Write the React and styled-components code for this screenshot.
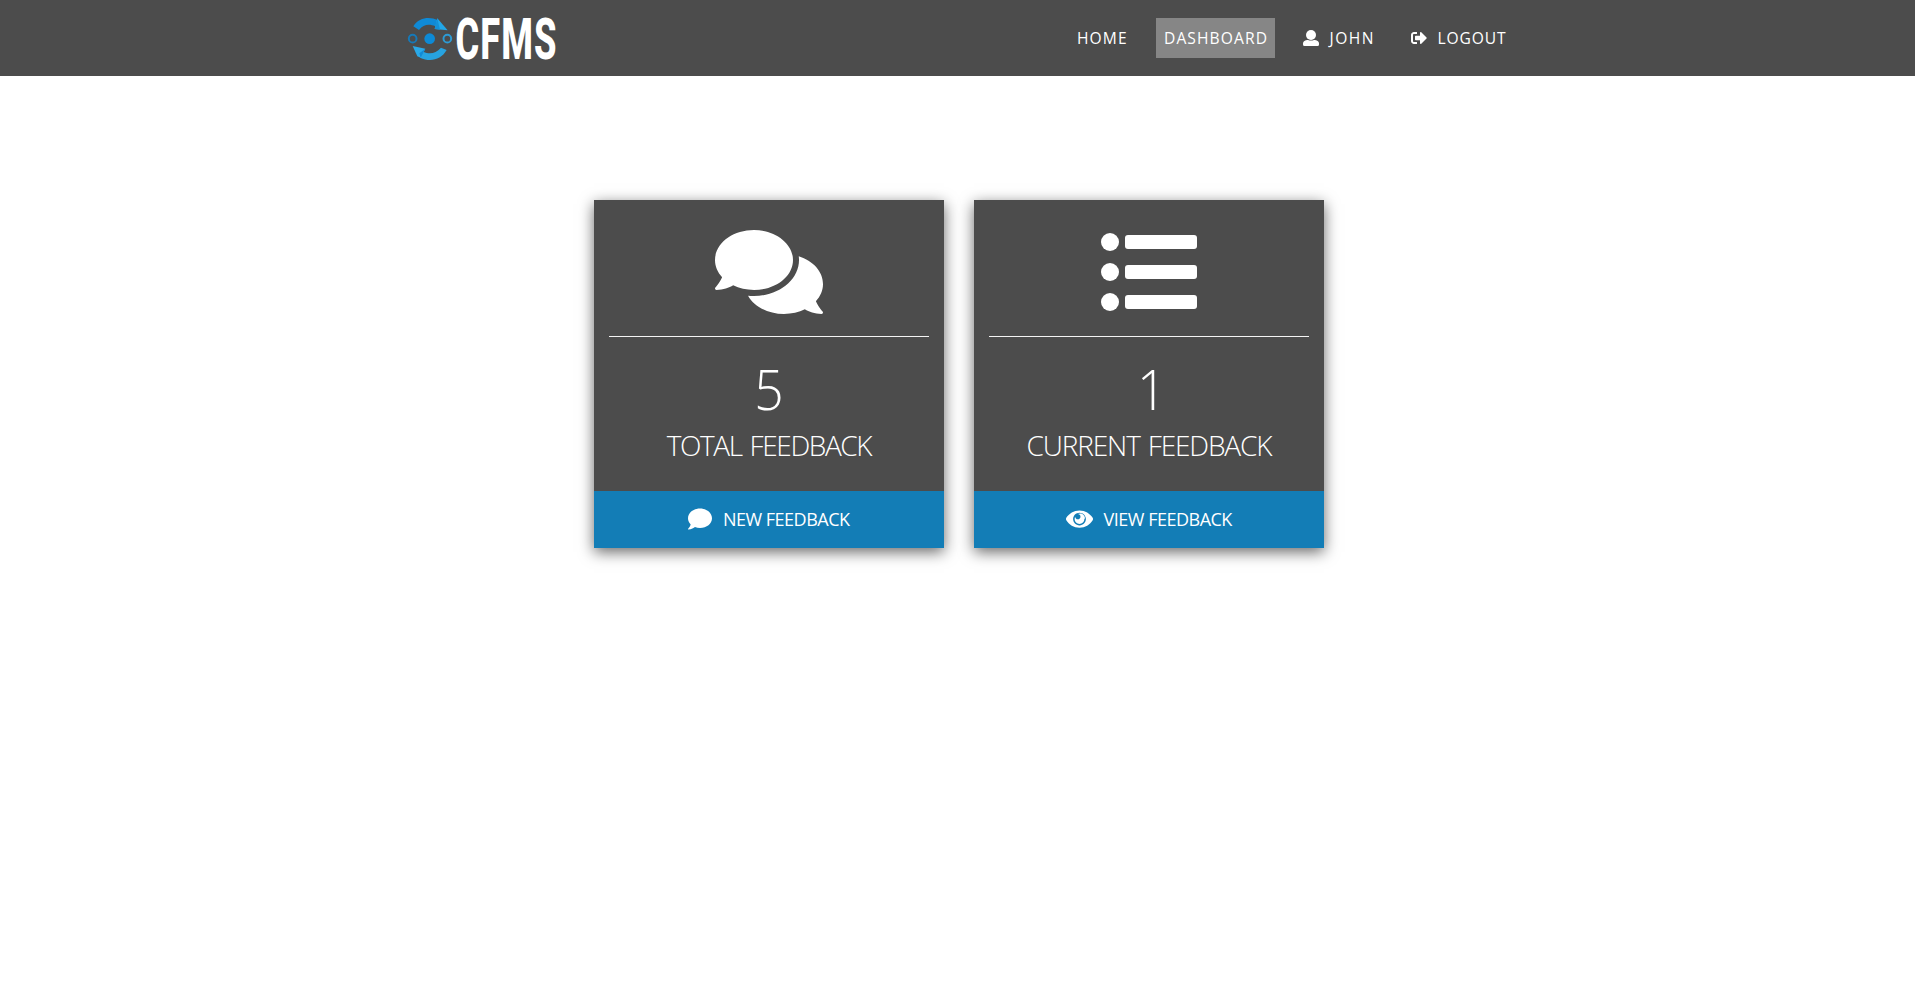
import React from "react";
import styled, { createGlobalStyle } from "styled-components";
import { FaComments, FaComment } from "react-icons/fa";

const GlobalStyle = createGlobalStyle`
  * { box-sizing: border-box; }
  body {
    margin: 0;
    background: #fff;
    color: #fff;
    font-family: "Segoe UI", "Open Sans", "Noto Sans", sans-serif;
  }
`;

const Page = styled.div`
  min-height: 100vh;
`;

const Header = styled.header`
  height: 76px;
  background: #4c4c4c;
`;

const HeaderInner = styled.div`
  width: 1140px;
  height: 100%;
  margin: 0 auto;
  padding: 0 15px 0 16.5px;
  display: flex;
  align-items: center;
  justify-content: space-between;
`;

const LogoLink = styled.a`
  display: flex;
  svg { display: block; }
`;

const Nav = styled.nav`
  display: flex;
  gap: 20px;
`;

const NavLink = styled.a`
  display: flex;
  align-items: center;
  width: ${(p) => p.$width}px;
  height: 40px;
  padding-left: 8.5px;
  background: ${(p) => (p.$active ? "#868686" : "transparent")};
  font-size: 15.6px;
  letter-spacing: ${(p) => p.$tracking || 1.1}px;
  white-space: nowrap;
  svg { margin-right: 10.5px; flex: none; }
`;

const Main = styled.main`
  display: flex;
  justify-content: center;
  gap: 30px;
  padding: 124px 0 0 3px;
`;

const Card = styled.section`
  width: 350px;
  height: 348px;
  display: flex;
  flex-direction: column;
  background: #4c4c4c;
  box-shadow: 0 4px 14px rgba(0, 0, 0, 0.6);
  text-align: center;
`;

const CardBody = styled.div`
  height: 291px;
  padding: 24px 15px 0;
`;

const CardIcon = styled.div`
  height: 113px;
  display: flex;
  justify-content: center;
  border-bottom: 1px solid #f4f4f4;
  svg { display: block; }
`;

const CommentsIcon = styled(FaComments)`
  width: 108px;
  height: 96px;
`;

const Count = styled.div`
  margin-top: 15px;
  padding-left: ${(p) => p.$indent || 0}px;
  font-size: 56px;
  font-weight: 330;
  line-height: 72px;
  transform: scaleX(0.92);
`;

const Title = styled.h2`
  margin: 3px 0 0;
  font-size: 28px;
  font-weight: 330;
  line-height: 36px;
  letter-spacing: ${(p) => p.$tracking}px;
  word-spacing: 2px;
  white-space: nowrap;
`;

const Action = styled.a`
  flex: 1;
  display: flex;
  align-items: center;
  justify-content: center;
  background: #137db6;
  padding-bottom: 2px;
  font-size: 18px;
  letter-spacing: ${(p) => p.$tracking}px;
  svg { margin-right: 10.5px; flex: none; }
`;

const Logo = () => (
  <svg width="180" height="76" viewBox="0 0 180 76">
    <g transform="translate(0 12) scale(.3333)">
      <path d="M28 43C45 15 77 13 101 24L94 43C75 35 59 37 45 54Z" fill="#0f8ad6" />
      <path d="M100 19L131 55 92 51Z" fill="#22a7e8" />
      <path d="M100 19L108 53 92 51Z" fill="#1490d6" />
      <path d="M128 114C111 144 79 151 48 137L58 119C78 129 95 124 111 107Z" fill="#27a3e0" />
      <path d="M26 102L64 110 50 137 40 133Z" fill="#2aa9e8" />
      <path d="M64 110L50 137 46 124Z" fill="#118bd6" />
      <circle cx="77" cy="80" r="16" fill="#0d8ad6" />
      <circle cx="26" cy="80" r="11.500" fill="none" stroke="#1679b8" strokeWidth="6" />
      <circle cx="130" cy="80" r="11.500" fill="none" stroke="#2c9bd5" strokeWidth="6" />
    </g>
    <text transform="translate(51.500 59) scale(.64 1)" fill="#fff" fontFamily="Roboto, sans-serif" fontWeight="800" fontSize="56.500" letterSpacing="1.800">CFMS</text>
  </svg>
);

const UserIcon = () => (
  <svg width="16" height="16" viewBox="0 0 16 16" fill="#fff">
    <circle cx="8" cy="5" r="5" />
    <path d="M4 10H5Q8 11.200 11 10H12Q16 10.500 16 13.500V14.500Q16 16 14.500 16H1.500Q0 16 0 14.500V13.500Q0 10.500 4 10Z" />
  </svg>
);

const LogoutIcon = () => (
  <svg width="16" height="16" viewBox="0 0 512 512" fill="#fff">
    <path d="M497 273L329 441c-15 15-41 4.500-41-17v-96H152c-13.300 0-24-10.700-24-24v-96c0-13.300 10.700-24 24-24h136V88c0-21.400 25.900-32 41-17l168 168c9.300 9.400 9.300 24.600 0 34zM192 436v-40c0-6.600-5.400-12-12-12H96c-17.700 0-32-14.300-32-32V160c0-17.700 14.300-32 32-32h84c6.600 0 12-5.400 12-12V76c0-6.600-5.400-12-12-12H96c-53 0-96 43-96 96v192c0 53 43 96 96 96h84c6.600 0 12-5.400 12-12z" />
  </svg>
);

const ListIcon = () => (
  <svg width="96" height="96" viewBox="0 0 512 512" fill="#fff">
    {[96, 256, 416].map((y) => (
      <g key={y}>
        <circle cx="48" cy={y} r="48" />
        <rect x="128" y={y - 37} width="384" height="74" rx="16" />
      </g>
    ))}
  </svg>
);

const EyeIcon = () => (
  <svg width="27" height="24" viewBox="0 0 576 512" fill="#fff">
    <path d="M569.400 231.600C513.100 135.900 407.800 72 288 72 168.100 72 62.800 135.900 6.600 231.600a48 48 0 0 0 0 48.700C62.900 376.100 168.200 440 288 440c119.900 0 225.200-63.900 281.400-159.600a48 48 0 0 0 0-48.800zM288 392c-75.200 0-136-60.800-136-136 0-75.200 60.800-136 136-136 75.200 0 136 60.800 136 136 0 75.200-60.800 136-136 136zm104-136c0 57.400-46.600 104-104 104s-104-46.600-104-104c0-17.700 4.400-34.300 12.200-48.900v.2c0 31.200 25.300 56.500 56.500 56.500s56.500-25.300 56.500-56.500c0-31.200-25.300-56.500-56.500-56.500h-.2c14.500-7.700 31.200-12.200 48.900-12.200 57.400.2 104 46.800 104 104z" />
  </svg>
);

export default function App() {
  return (
    <Page>
      <GlobalStyle />
      <Header>
        <HeaderInner>
          <LogoLink><Logo /></LogoLink>
          <Nav>
            <NavLink $width={67}>HOME</NavLink>
            <NavLink $width={119} $active>DASHBOARD</NavLink>
            <NavLink $width={88} $tracking={1.5}><UserIcon />JOHN</NavLink>
            <NavLink $width={110} $tracking={0.9}><LogoutIcon />LOGOUT</NavLink>
          </Nav>
        </HeaderInner>
      </Header>
      <Main>
        <Card>
          <CardBody>
            <CardIcon><CommentsIcon /></CardIcon>
            <Count>5</Count>
            <Title $tracking={-1.4}>TOTAL FEEDBACK</Title>
          </CardBody>
          <Action $tracking={-0.5}><FaComment size={24} />NEW FEEDBACK</Action>
        </Card>
        <Card>
          <CardBody>
            <CardIcon><ListIcon /></CardIcon>
            <Count $indent={6}>1</Count>
            <Title $tracking={-1.15}>CURRENT FEEDBACK</Title>
          </CardBody>
          <Action $tracking={-0.5}><EyeIcon />VIEW FEEDBACK</Action>
        </Card>
      </Main>
    </Page>
  );
}
